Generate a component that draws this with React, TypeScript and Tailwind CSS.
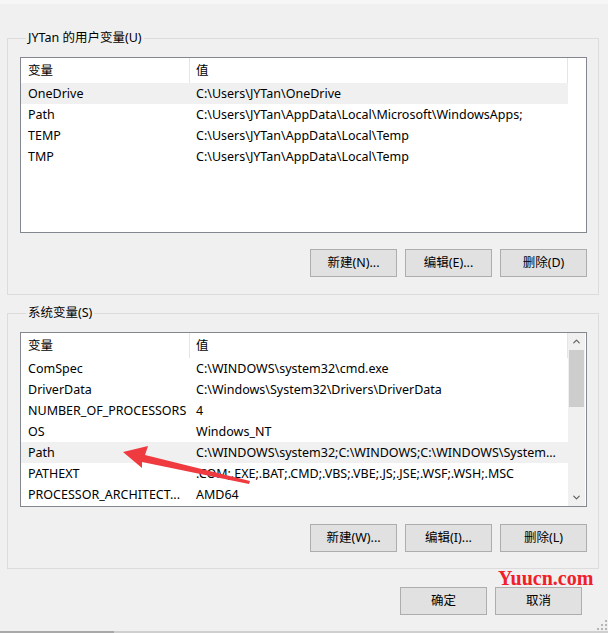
import { ChevronUp, ChevronDown } from 'lucide-react';

type Row = { name: string; value: string; selected?: boolean };

const userVars: Row[] = [
  { name: 'OneDrive', value: 'C:\\Users\\JYTan\\OneDrive', selected: true },
  { name: 'Path', value: 'C:\\Users\\JYTan\\AppData\\Local\\Microsoft\\WindowsApps;' },
  { name: 'TEMP', value: 'C:\\Users\\JYTan\\AppData\\Local\\Temp' },
  { name: 'TMP', value: 'C:\\Users\\JYTan\\AppData\\Local\\Temp' },
];

const systemVars: Row[] = [
  { name: 'ComSpec', value: 'C:\\WINDOWS\\system32\\cmd.exe' },
  { name: 'DriverData', value: 'C:\\Windows\\System32\\Drivers\\DriverData' },
  { name: 'NUMBER_OF_PROCESSORS', value: '4' },
  { name: 'OS', value: 'Windows_NT' },
  { name: 'Path', value: 'C:\\WINDOWS\\system32;C:\\WINDOWS;C:\\WINDOWS\\System...', selected: true },
  { name: 'PATHEXT', value: '.COM;.EXE;.BAT;.CMD;.VBS;.VBE;.JS;.JSE;.WSF;.WSH;.MSC' },
  { name: 'PROCESSOR_ARCHITECT...', value: 'AMD64' },
];

const WinButton = ({ label }: { label: string }) => (
  <button className="h-[28px] w-[87px] border border-[#adadad] bg-[#e1e1e1] text-[12.5px] text-black">
    {label}
  </button>
);

const ListView = ({ rows, height, scroll }: { rows: Row[]; height: string; scroll?: boolean }) => (
  <div className={`flex border border-[#828790] bg-white ${height}`}>
    <div className="flex w-[547px] flex-col">
      {/* header */}
      <div className="flex h-[25px] items-center">
        <div className="w-[168px] pl-[7px] pt-[1px]">变量</div>
        <div className="h-full w-px bg-[#e5e5e5]" />
        <div className="flex-1 pl-[6px] pt-[1px]">值</div>
        <div className="h-full w-px bg-[#e5e5e5]" />
      </div>
      {rows.map((r, i) => (
        <div
          key={i}
          className={`flex h-[21px] items-center whitespace-nowrap ${r.selected ? 'bg-[#f0f0f0]' : ''}`}
        >
          <div className="w-[169px] overflow-hidden pl-[7px]">{r.name}</div>
          <div className="flex-1 overflow-hidden pl-[6px]">{r.value}</div>
        </div>
      ))}
    </div>
    {scroll ? (
      <div className="flex w-[17px] flex-col bg-[#f0f0f0]">
        <div className="flex h-[17px] items-center justify-center">
          <ChevronUp size={11} strokeWidth={2.6} className="text-[#606060]" />
        </div>
        <div className="mx-[1px] h-[57px] bg-[#cdcdcd]" />
        <div className="flex-1" />
        <div className="flex h-[17px] items-center justify-center">
          <ChevronDown size={11} strokeWidth={2.6} className="text-[#606060]" />
        </div>
      </div>
    ) : null}
  </div>
);

const App = () => {
  return (
    <div className="relative flex h-[633px] w-[608px] flex-col overflow-hidden bg-[#f0f0f0] font-['Noto_Sans','Noto_Sans_CJK_SC',sans-serif] text-[12.5px] leading-[16px] text-black">
      <div className="h-[4px] bg-[#f6f6f6]" />

      {/* user variables */}
      <fieldset className="ml-[7px] mt-[26px] w-[592px] border border-[#dcdcdc] pb-[17px] pl-[12px] pr-[11px]">
        <legend className="ml-[6px] px-[2px] leading-[16px]">JYTan 的用户变量(U)</legend>
        <div className="mt-[11px]">
          <ListView rows={userVars} height="h-[176px]" />
        </div>
        <div className="mt-[16px] flex justify-end gap-[8px]">
          <WinButton label="新建(N)..." />
          <WinButton label="编辑(E)..." />
          <WinButton label="删除(D)" />
        </div>
      </fieldset>

      {/* system variables */}
      <fieldset className="ml-[7px] mt-[10px] w-[592px] border border-[#dcdcdc] pb-[16px] pl-[12px] pr-[11px]">
        <legend className="ml-[6px] px-[2px] leading-[16px]">系统变量(S)</legend>
        <div className="mt-[11px]">
          <ListView rows={systemVars} height="h-[175px]" scroll />
        </div>
        <div className="mt-[17px] flex justify-end gap-[8px]">
          <WinButton label="新建(W)..." />
          <WinButton label="编辑(I)..." />
          <WinButton label="删除(L)" />
        </div>
      </fieldset>

      <div className="mt-[18px] flex justify-end gap-[8px] pr-[26px]">
        <WinButton label="确定" />
        <WinButton label="取消" />
      </div>

      <div className="flex-1" />
      <div className="flex h-[2px]">
        <div className="w-[114px] bg-[#a9a9a9]" />
        <div className="flex-1 bg-[#cfcfcf]" />
      </div>

      {/* resize grip */}
      <svg className="absolute bottom-[3px] right-[1px]" width="10" height="10" viewBox="0 0 10 10">
        <g fill="#b5b5b5">
          <rect x="8" y="0" width="2" height="2" />
          <rect x="4" y="4" width="2" height="2" />
          <rect x="8" y="4" width="2" height="2" />
          <rect x="0" y="8" width="2" height="2" />
          <rect x="4" y="8" width="2" height="2" />
          <rect x="8" y="8" width="2" height="2" />
        </g>
      </svg>

      {/* watermark */}
      <div className="absolute left-[498px] top-[568px] font-['Liberation_Serif',serif] text-[20px] font-bold leading-[20px] text-[#f0202a]">
        Yuucn.com
      </div>

      {/* annotation arrow */}
      <svg className="pointer-events-none absolute left-0 top-0" width="608" height="633">
        <polygon
          points="123,452 148,446 145,455 250,481 249,484 142,462 142,468"
          fill="#ef3a3f"
        />
      </svg>
    </div>
  );
};

export default App;
